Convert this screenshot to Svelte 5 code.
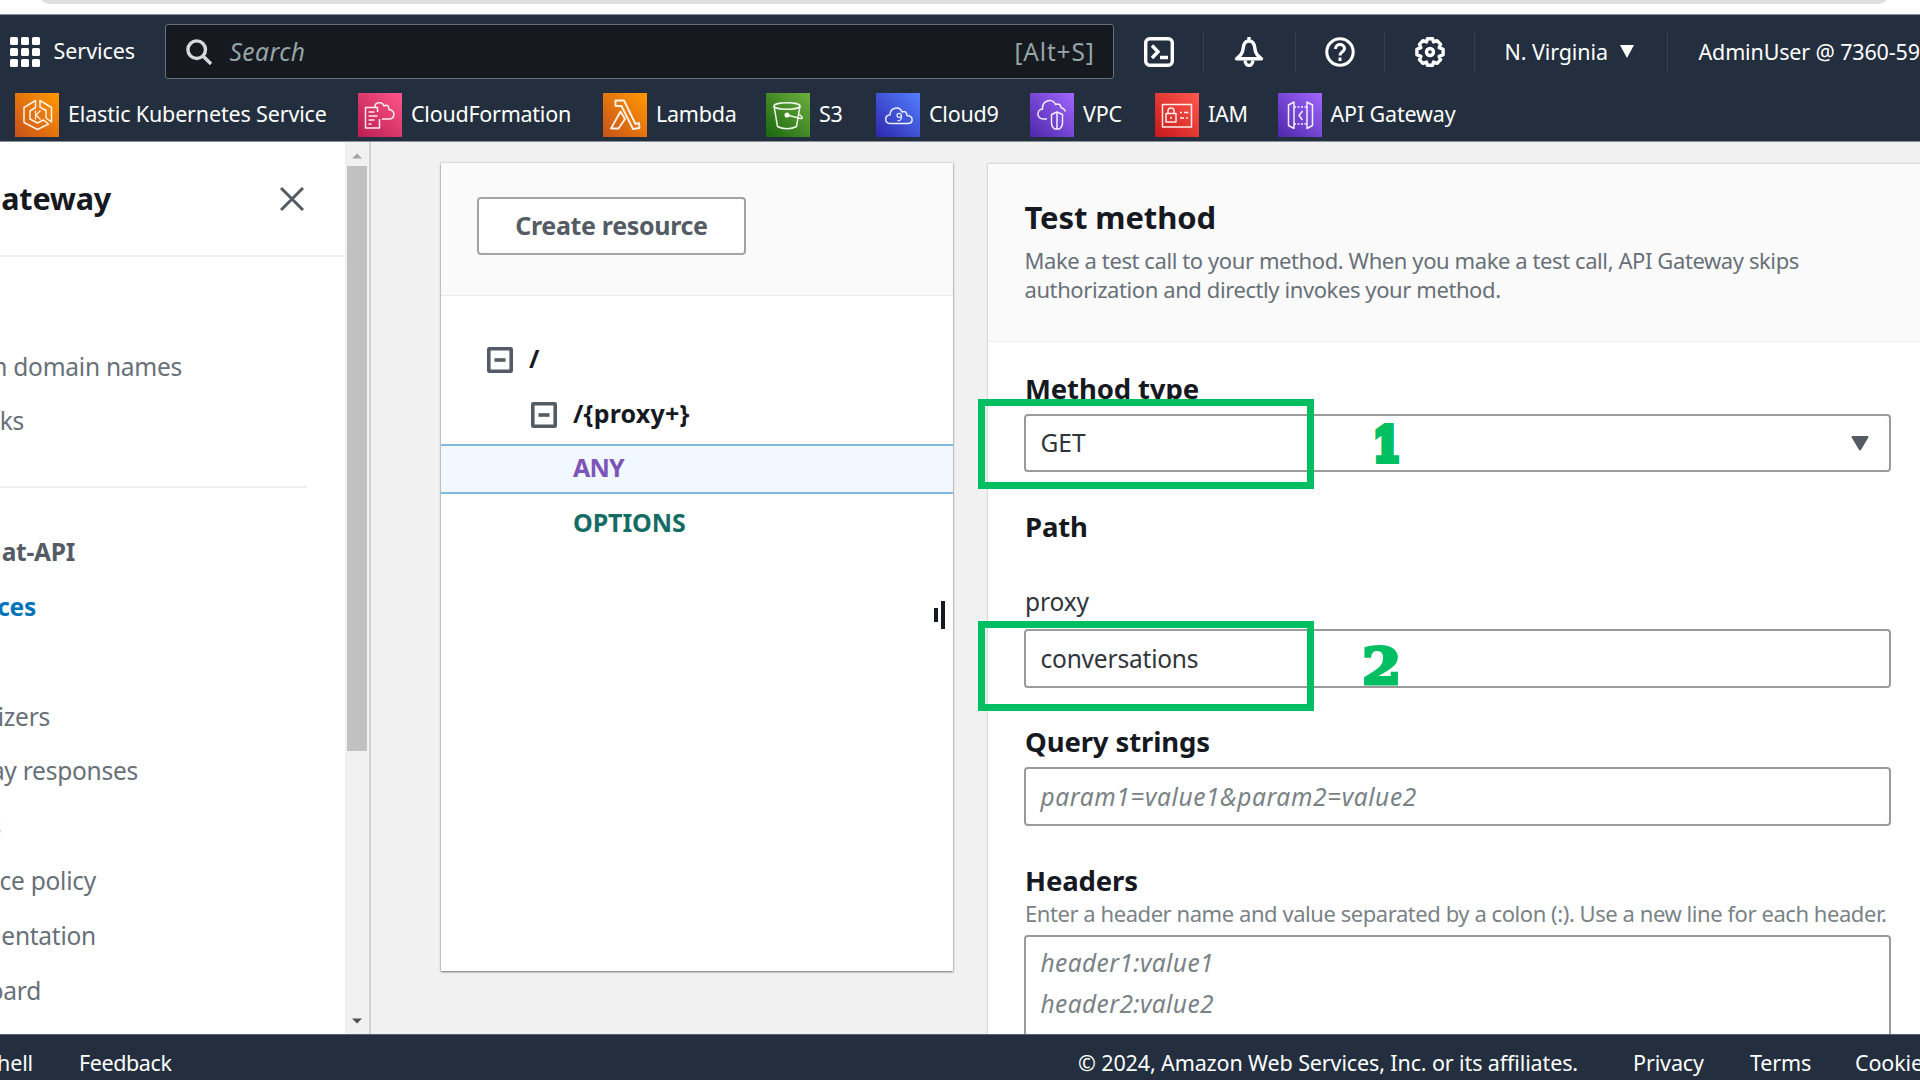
<script>
  const favorites = [
    { name: 'Elastic Kubernetes Service', icon: 'eks', tone: 'orange' },
    { name: 'CloudFormation', icon: 'cfn', tone: 'pink' },
    { name: 'Lambda', icon: 'lambda', tone: 'orange' },
    { name: 'S3', icon: 's3', tone: 'green' },
    { name: 'Cloud9', icon: 'cloud9', tone: 'blue' },
    { name: 'VPC', icon: 'vpc', tone: 'purple' },
    { name: 'IAM', icon: 'iam', tone: 'red' },
    { name: 'API Gateway', icon: 'api', tone: 'purple' }
  ];

  // `end` is where each label's right edge sits in the scrolled-off panel
  const general = [
    { label: 'm domain names', end: 182 },
    { label: 'nks', end: 24 }
  ];
  const api = [
    { label: 'at-API', end: 75, kind: 'heading' },
    { label: 'ces', end: 36, kind: 'active' },
    { label: '', end: 0 },
    { label: 'izers', end: 50 },
    { label: 'ay responses', end: 138 },
    { label: 's', end: 1 },
    { label: 'ce policy', end: 96 },
    { label: 'entation', end: 96 },
    { label: 'oard', end: 41 }
  ];
</script>

<div class="screen">
  <div class="browser"><div class="omnibox"></div></div>

  <header>
    <div class="bar">
      <svg class="grid-icon" viewBox="0 0 30 30" fill="#fff">
        {#each [0, 11, 22] as y}{#each [0, 11, 22] as x}<rect {x} {y} width="8" height="8" rx="1.5" />{/each}{/each}
      </svg>
      <span class="services">Services</span>
      <div class="search">
        <svg viewBox="0 0 26 26" fill="none" stroke="#d5dbdb" stroke-width="3.4"><circle cx="10.7" cy="10.7" r="8.8" /><path d="M17 17l8 8" /></svg>
        <span class="ph">Search</span>
        <span class="key">[Alt+S]</span>
      </div>
      <div class="tool shell">
        <svg viewBox="0 0 30 30" fill="none" stroke="#fff" stroke-width="3.4"><rect x="1.7" y="1.7" width="26.6" height="26.6" rx="4" /><path d="M8 8.500l6 6.300L8 21M16 20.500h8" /></svg>
      </div>
      <div class="tool bell">
        <svg viewBox="0 0 30 30" fill="none" stroke="#fff" stroke-width="3.4" stroke-linejoin="round"><path d="M15 0v4M15 4c-4 0-5.400 3.200-5.800 7-.5 5.500-2.600 7.600-6.700 10.800h25c-4.100-3.200-6.200-5.300-6.700-10.800-.4-3.800-1.800-7-5.800-7z" /><path d="M11.200 23.500c0 6.500 7.600 6.500 7.600 0" /></svg>
      </div>
      <div class="tool help">
        <svg viewBox="0 0 30 30" fill="none" stroke="#fff" stroke-width="3"><circle cx="15" cy="15" r="13.2" /><path d="M10.500 12c0-6 9-5.600 9-.5 0 3.400-4.500 3-4.500 7" /><path d="M15 20.500v3.500" /></svg>
      </div>
      <div class="tool gear">
        <svg viewBox="0 0 30 30" fill="none" stroke="#fff" stroke-width="3.4" stroke-linejoin="round"><path d="M12.400 1.800h5.200l.9 3.100 3.600-1.200 3.500 3.700-1.500 3.200 4 1.700v5.400l-4 1.700 1.500 3.200-3.500 3.700-3.600-1.200-.9 3.100h-5.200l-.9-3.100-3.600 1.200-3.500-3.700 1.500-3.200-4-1.700v-5.400l4-1.700-1.500-3.200 3.500-3.700 3.600 1.200z" /><circle cx="15" cy="15" r="3.500" /></svg>
      </div>
      <div class="region"><span>N. Virginia</span><svg viewBox="0 0 14 13"><path d="M0 0h14L7 13z" fill="#fff" /></svg></div>
      <div class="user">AdminUser @ 7360-5937</div>
    </div>

    <nav class="favorites">
      {#each favorites as f}
        <div class="fav">
          <svg class="tile {f.tone}" viewBox="0 0 44 44" fill="none" stroke="#fff" stroke-width="1.5" stroke-linejoin="round" stroke-opacity=".9">
            {#if f.icon === 'eks'}
              <path d="M20.500 7.500L9 14.500v15L22.500 36.500l11-5.500-5-4-6 3-7.500-4V18l5.500-3.500z" />
              <path d="M25 7.500l11.500 7V29L31 25v-7.500l-6-3.500z" />
              <path d="M20.500 17.500v9M25.500 17.500L21 22l4.500 4.500" stroke-width="1.300" />
            {:else if f.icon === 'cfn'}
              <path d="M19.500 19v-4.500H7.500V35h14V26M10.500 19h6M10.500 23h9M10.500 27h6M10.500 31h3" />
              <path d="M17 14c-.500-5 7.500-6 9-1 3-2 5 0 5 3.500 7 1 6 9.500 0 9.500h-7" />
            {:else if f.icon === 'lambda'}
              <path d="M12.500 7.500h8.500L32.500 31l3.500-1 .500 5-6.500 1L18.500 13h-6zM17.500 18.500L8 35.500h7.500L22 26z" stroke-width="1.900" />
            {:else if f.icon === 's3'}
              <ellipse cx="21" cy="13" rx="13" ry="3.300" /><path d="M8 13l3.500 20.500c5 3 14 3 19 0L34 13M21 22l13.500 3.500c3 .500 1.500-2-1-4" /><circle cx="21" cy="22" r="1.800" fill="#fff" />
            {:else if f.icon === 'cloud9'}
              <path d="M14.500 30.500c-6 0-6.500-8-.5-8.500 0-7.500 9.500-9.500 12-3 3-1.500 5 .5 5 3.500 7 .5 6.500 8 .5 8z" />
              <path d="M25.500 22.500c0 2.500-4.500 2.500-4.500-.200s4.500-2.600 4.500 1.200c0 3-1.500 4.500-4 4" stroke-width="1.200" />
            {:else if f.icon === 'vpc'}
              <path d="M17 26h-3.500c-7.500-.5-7-9.500-1-10C12 6.500 23 5 25.500 11.500c3-1.500 5.500.5 5.500 3 2 .5 3.500 1.500 4.500 4" />
              <path d="M27 19l5.500 2.500v8c0 3.500-1.500 5.500-3.500 6.500h-4c-2-1-3.500-3-3.500-6.500v-8zM27 19v17" />
            {:else if f.icon === 'iam'}
              <rect x="7.500" y="11.500" width="29" height="22.500" /><rect x="11" y="20.500" width="10" height="8.500" /><path d="M13 20.500v-3c0-3.500 6-3.500 6 0v3M16 23.500v2.500M25 19.500h2M29 19.500h4.500M25 25h4M31 25h2" />
            {:else}
              <path d="M16 9l-5.500 3v20.500l5.500 3M16 8.500v27.500M29 9l5.500 3v20.500l-5.500 3M29 8.500v27.500M24.500 18L21 22.500l3.500 4.500" />
              <path d="M16 14h13M16 31h13" stroke-dasharray="2 1.500" />
            {/if}
          </svg>
          <span>{f.name}</span>
        </div>
      {/each}
    </nav>
  </header>

  <main>
    <aside>
      <div class="nav">
        <div class="nav-head">
          <h2>Gateway</h2>
          <svg viewBox="0 0 24 24" fill="none" stroke="#545b64" stroke-width="3"><path d="M1 1l22 22M23 1L1 23" /></svg>
        </div>
        <div class="group general">
          {#each general as item}<div class="link" style="width:{item.end}px">{item.label}</div>{/each}
        </div>
        <div class="group api">
          {#each api as item}<div class="link {item.kind ?? ''}" style="width:{item.end}px">{item.label}</div>{/each}
        </div>
      </div>
      <div class="scroll">
        <svg viewBox="0 0 10 5"><path d="M5 0l5 5H0z" fill="#a3a3a3" /></svg>
        <div class="thumb"></div>
        <svg viewBox="0 0 10 5"><path d="M0 0h10L5 5z" fill="#505050" /></svg>
      </div>
    </aside>

    <section class="resources">
      <div class="res-head"><button>Create resource</button></div>
      <div class="tree">
        <div class="node root"><svg viewBox="0 0 26 26" fill="none" stroke="#545b64" stroke-width="3.600"><rect x="1.800" y="1.800" width="22.400" height="22.400" rx=".5" /><path d="M7.500 13h11" /></svg><b>/</b></div>
        <div class="node child"><svg viewBox="0 0 26 26" fill="none" stroke="#545b64" stroke-width="3.600"><rect x="1.800" y="1.800" width="22.400" height="22.400" rx=".5" /><path d="M7.500 13h11" /></svg><b>/&#123;proxy+&#125;</b></div>
        <div class="method any">ANY</div>
        <div class="method options">OPTIONS</div>
      </div>
      <div class="handle"><i></i><i></i></div>
    </section>

    <section class="test">
      <div class="test-head">
        <h1>Test method</h1>
        <p>Make a test call to your method. When you make a test call, API Gateway skips<br />authorization and directly invokes your method.</p>
      </div>
      <div class="form">
        <h3>Method type</h3>
        <div class="field">
          <span>GET</span>
          <svg viewBox="0 0 18 15"><path d="M1.500 1h15L9 13.500z" fill="#545b64" stroke="#545b64" stroke-width="2" stroke-linejoin="round" /></svg>
        </div>
        <h3 class="path">Path</h3>
        <div class="label">proxy</div>
        <div class="field"><span class="tight">conversations</span></div>
        <h3 class="query">Query strings</h3>
        <div class="field low"><em>param1=value1&amp;param2=value2</em></div>
        <h3 class="headers">Headers</h3>
        <div class="hint">Enter a header name and value separated by a colon (:). Use a new line for each header.</div>
        <div class="area"><em>header1:value1</em><em>header2:value2</em></div>
      </div>
      <div class="mark one"></div>
      <div class="mark two"></div>
      <div class="num n1">1</div>
      <div class="num n2">2</div>
    </section>
  </main>

  <footer>
    <span class="shell-link">hell</span>
    <span class="feedback">Feedback</span>
    <span class="copy">© 2024, Amazon Web Services, Inc. or its affiliates.</span>
    <span class="privacy">Privacy</span>
    <span class="terms">Terms</span>
    <span class="cookie">Cookie</span>
  </footer>
</div>

<style>
  :global(body) { margin: 0; overflow: hidden; }
  .screen, .screen * { box-sizing: border-box; }
  .screen {
    width: 1920px; height: 1080px; overflow: hidden; display: flex; flex-direction: column;
    font-family: 'Noto Sans', sans-serif; background: #f1f1f1; color: #16191f; white-space: nowrap;
  }
  h1, h2, h3, p { margin: 0; }
  svg { display: block; flex: none; }

  .browser { height: 14px; background: #fff; flex: none; }
  .omnibox { height: 4px; margin: 0 34px 0 42px; background: #dfdfdf; border-radius: 0 0 10px 10px / 0 0 4px 4px; }

  header { height: 128px; flex: none; background: #232f3e; border-top: 1px solid #8a9099; border-bottom: 1px solid #8a9099; color: #fff; font-size: 21.500px; }
  .bar { display: flex; align-items: center; height: 73px; }
  .bar > * { flex: none; }
  .grid-icon { width: 30px; height: 30px; margin-left: 10px; }
  .services { width: 112px; margin-left: 13.500px; padding-bottom: 2px; letter-spacing: -.05px; }
  .search {
    width: 949px; height: 55px; margin-left: -1px; border: 1px solid #687078; border-radius: 3px; background: #16191f;
    display: flex; align-items: center; padding: 0 18px 0 20px; font-size: 24.500px; color: #95a5a6;
  }
  .search svg { width: 26px; height: 26px; }
  .ph { flex: 1; margin-left: 18px; font-style: italic; letter-spacing: .5px; }
  .key { letter-spacing: .8px; }
  .tool { height: 42px; border-right: 1px solid #354250; display: flex; align-items: center; }
  .tool svg { width: 30px; height: 30px; }
  .shell { width: 90px; padding-left: 30px; }
  .bell { width: 92px; padding-left: 30px; }
  .help { width: 89px; padding-left: 29px; }
  .gear { width: 90px; padding-left: 30px; }
  .region { width: 193px; height: 42px; border-right: 1px solid #354250; display: flex; align-items: center; gap: 12px; padding-left: 30px; letter-spacing: -.1px; }
  .region svg { width: 14px; height: 13px; }
  .user { padding-left: 31px; letter-spacing: -.15px; }

  .favorites { display: grid; grid-template-columns: 343px 245px 163px 110px 154px 125px 122.500px 200px; padding: 5px 0 0 15px; letter-spacing: -.25px; }
  .fav { display: flex; align-items: center; gap: 9px; height: 44px; }
  .fav:first-child, .fav:last-child { letter-spacing: -.16px; }
  .tile { width: 44px; height: 44px; }
  .fav span { padding-bottom: 3px; }
  .orange { background: linear-gradient(45deg, #c8511b, #f90); }
  .pink { background: linear-gradient(45deg, #b91c52, #ff5689); }
  .green { background: linear-gradient(45deg, #1b660f, #6cae3e); }
  .blue { background: linear-gradient(45deg, #2e27ad, #527fff); }
  .purple { background: linear-gradient(45deg, #4d27a8, #a166ff); }
  .red { background: linear-gradient(45deg, #c8171a, #ff5a4e); }

  main { flex: 1; min-height: 0; display: flex; overflow: hidden; }

  aside { width: 371px; display: flex; border-right: 2px solid #d2d2d2; background: #fff; }
  .nav { width: 345px; overflow: hidden; }
  .nav-head { display: flex; align-items: center; height: 115px; border-bottom: 2px solid #eee; }
  .nav-head h2 { width: 111px; display: flex; justify-content: flex-end; padding-bottom: 2px; font-size: 30.500px; letter-spacing: -.2px; }
  .nav-head svg { width: 24px; height: 24px; margin-left: 169px; }
  .group { font-size: 24.500px; color: #687078; letter-spacing: -.25px; }
  .general { width: 307px; height: 231px; padding-top: 82.500px; border-bottom: 2px solid #eee; }
  .api { padding-top: 37.200px; }
  .link { height: 54.800px; line-height: 54.800px; display: flex; justify-content: flex-end; }
  .heading { font-weight: 700; color: #545b64; }
  .active { font-weight: 700; color: #0073bb; }
  .scroll { width: 24px; background: #f1f1f1; display: flex; flex-direction: column; align-items: center; padding: 11px 0 10px; }
  .scroll svg { width: 10px; height: 6px; }
  .thumb { width: 20px; height: 585px; margin: 7px 0 auto; background: #c1c1c1; }

  .resources { position: relative; width: 512px; height: 808px; margin: 21px 0 0 70px; background: #fff; box-shadow: 0 1px 2px 0 #6f7b7c, 0 0 1px 1px #dfe2e2; }
  .res-head { height: 133px; padding: 34px 0 0 36px; background: #fafafa; border-bottom: 1px solid #eaeded; }
  button { width: 269px; height: 58px; border: 2px solid #a0a4a8; border-radius: 4px; background: #fff; color: #545b64; font: 700 25px 'Noto Sans', sans-serif; letter-spacing: -.34px; padding: 0 0 2px; }
  .tree { padding-top: 36px; font-size: 25px; font-weight: 700; }
  .node { height: 55px; display: flex; align-items: center; gap: 16px; }
  .node svg { width: 26px; height: 26px; }
  .node b { padding-bottom: 3px; font-weight: 700; letter-spacing: .2px; }
  .root { padding-left: 46px; }
  .child { padding-left: 90px; }
  .method { height: 51px; line-height: 44px; padding-left: 132px; letter-spacing: -.2px; }
  .any { margin-top: 2px; height: 50px; line-height: 43px; background: #f1f8ff; border: solid #7fb9dd; border-width: 2px 0; color: #7d54b8; letter-spacing: -.8px; }
  .options { line-height: 57px; color: #156c62; letter-spacing: -.1px; }
  .handle { position: absolute; right: 8px; top: 437.500px; display: flex; align-items: center; gap: 3px; }
  .handle i { width: 4px; height: 28px; background: #16191f; }
  .handle i:first-child { height: 14px; }

  .test { position: relative; width: 932px; height: 900px; margin: 22px 0 0 35px; flex: none; background: #fff; box-shadow: 0 0 1px 1px #d8dbdb; }
  .test-head { height: 177.500px; padding: 33.500px 0 0 36.500px; background: #fafafa; border-bottom: 1px solid #eaeded; }
  h1 { font-size: 31px; line-height: 38px; letter-spacing: -.1px; }
  p { margin-top: 10px; font-size: 22px; line-height: 29px; letter-spacing: -.41px; color: #687078; }
  .form { padding: 28px 29px 0 36px; }
  h3 { font-size: 27.500px; line-height: 36px; letter-spacing: -.12px; padding-left: 1px; position: relative; top: 1px; }
  .field { height: 58.500px; margin-top: 8px; border: 2px solid #9a9a9a; border-radius: 4px; display: flex; align-items: center; justify-content: space-between; padding: 0 20px 1px 14.500px; font-size: 24.500px; }
  .field svg { width: 18px; height: 15px; margin-top: 2px; }
  .field span { color: #30353b; }
  .low { height: 59px; padding-bottom: 0; }
  .tight { letter-spacing: -.2px; }
  em { letter-spacing: .6px; color: #7a8286; }
  .path { margin-top: 36px; }
  .label { margin: 41px 0 0 1px; font-size: 24.500px; line-height: 33px; color: #30353b; letter-spacing: -.1px; }
  .label + .field { margin-top: 11px; padding-bottom: 0; }
  .query { margin-top: 35px; }
  .headers { margin-top: 36px; }
  .hint { padding: 1px 0 0 1px; font-size: 22px; line-height: 28px; letter-spacing: -.44px; color: #7a8286; }
  .area { height: 160px; margin-top: 8px; border: 2px solid #9a9a9a; border-radius: 4px; padding: 5.500px 14.500px; font-size: 24.500px; line-height: 41px; }
  .area em { display: block; letter-spacing: .4px; }

  .mark { position: absolute; left: -10px; width: 336px; height: 90px; border: 7px solid #00bf63; }
  .mark.one { top: 235px; }
  .mark.two { top: 457px; }
  .num { position: absolute; font: 700 50px/50px 'DejaVu Serif', serif; color: #00bf63; -webkit-text-stroke: 3px #00bf63; transform-origin: 0 50%; }
  .n1 { left: 385px; top: 256px; font-size: 47px; -webkit-text-stroke-width: 6px; transform: scaleX(.84); }
  .n2 { left: 374px; top: 478px; transform: scaleX(1.130); }

  footer { height: 46px; flex: none; display: flex; align-items: center; background: #232f3e; border-top: 1px solid #5a6470; color: #fff; font-size: 21.500px; padding-top: 10px; line-height: 36px; letter-spacing: -.12px; }
  footer > span { flex: none; }
  .shell-link { width: 79px; display: flex; padding-right: 46px; justify-content: flex-end; }
  .feedback { width: 999px; letter-spacing: -.4px; }
  .copy { width: 555px; letter-spacing: -.12px; }
  .privacy { width: 117px; }
  .terms { width: 105px; }
</style>
